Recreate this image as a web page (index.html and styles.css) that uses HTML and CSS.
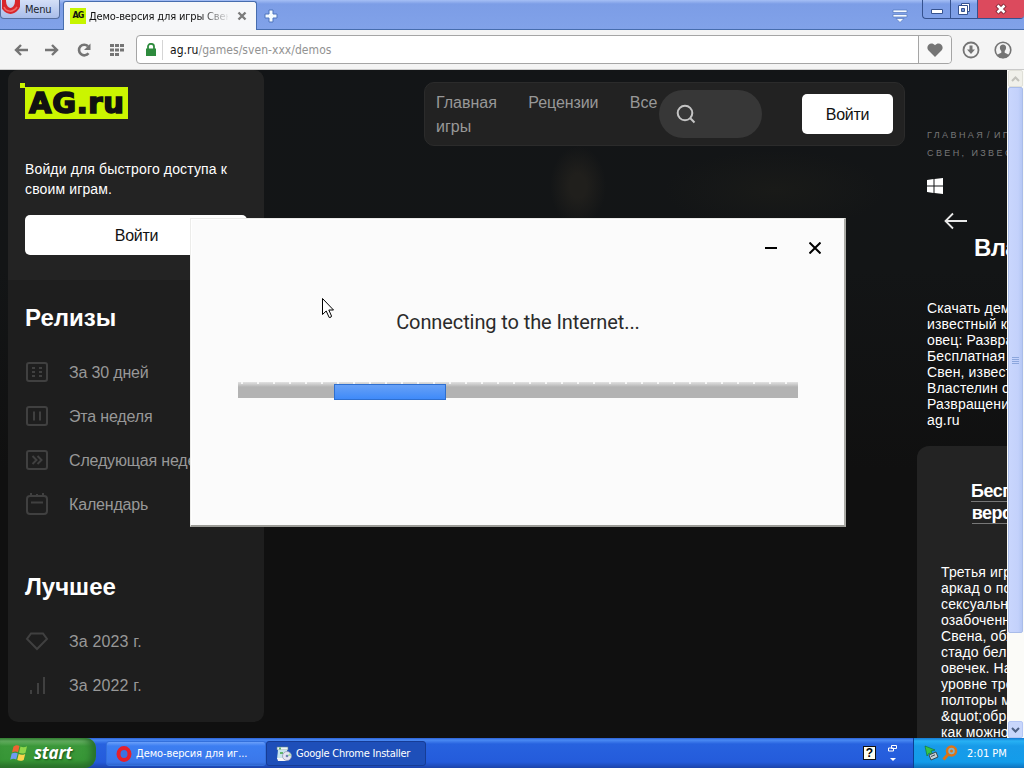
FILE: index.html
```html
<!DOCTYPE html>
<html lang="ru">
<head>
    <meta charset="UTF-8">
    <meta name="viewport" content="width=device-width, initial-scale=1.0">
    <title>Демо-версия для игры Свен</title>
    <link rel="stylesheet" href="styles.css">
</head>
<body>
    <div class="tab-bar">
        <div class="opera-menu">
            <svg width="18" height="15" viewBox="0 0 18 15">
                <ellipse cx="8.500" cy="1" rx="7.500" ry="10" fill="none" stroke="#d8262c" stroke-width="6"/>
                <path d="M2 7c2 5 9 6 13 0" fill="none" stroke="#f06a68" stroke-width="1.500"/>
            </svg>
            <span>Menu</span>
        </div>
        <div class="tab">
            <span class="favicon">AG</span>
            <span class="tab-title">Демо-версия для игры Свен</span>
            <svg class="tab-close" width="10" height="10" viewBox="0 0 10 10"><path d="M1.500 1.500l7 7M8.500 1.500l-7 7" stroke="#7b7b7b" stroke-width="2.400"/></svg>
        </div>
        <svg class="tab-add" width="14" height="14" viewBox="0 0 14 14"><path d="M5 1h4v4h4v4H9v4H5V9H1V5h4z" fill="#f4fbff" stroke="#4f74bd"/></svg>
        <svg class="tab-list" width="16" height="14" viewBox="0 0 16 14"><path d="M1 1h14v2.500H1zM1 5.500h14V8H1zM4 9.500h8L8 13.500z" fill="#f5faff" stroke="#5277be" stroke-width=".7"/></svg>
        <div class="window-buttons">
            <span class="win-btn"><svg width="14" height="17" viewBox="0 0 14 17"><path d="M1.500 9.500h11v4h-11z" fill="#fff" stroke="#35528f"/></svg></span>
            <span class="win-btn"><svg width="14" height="17" viewBox="0 0 14 17"><path d="M4.500 3.500h8v8h-8z" fill="#fff" stroke="#35528f"/><path d="M1.500 5.500h9v9h-9z" fill="#fff" stroke="#35528f"/><path d="M4.500 8.500h3v3h-3z" fill="#7593d4" stroke="#35528f"/></svg></span>
            <span class="win-btn win-close"><svg width="14" height="17" viewBox="0 0 14 17"><path d="M3 5l8 8M11 5l-8 8" stroke="#7b2433" stroke-width="4.500"/><path d="M3.500 5.500l7 7M10.500 5.500l-7 7" stroke="#fff" stroke-width="2.600"/></svg></span>
        </div>
    </div>

    <div class="toolbar">
        <svg class="tool back" width="14" height="12" viewBox="0 0 14 12"><path d="M14 6H2M7 1L2 6l5 5" fill="none" stroke="#747474" stroke-width="2.400"/></svg>
        <svg class="tool forward" width="14" height="12" viewBox="0 0 14 12"><path d="M0 6h12M7 1l5 5-5 5" fill="none" stroke="#747474" stroke-width="2.400"/></svg>
        <svg class="tool reload" width="14" height="14" viewBox="0 0 14 14"><path d="M11.500 10.300A5.300 5.300 0 1 1 11 3.200" fill="none" stroke="#747474" stroke-width="2.600"/><path d="M13.500 .5v6.500H7z" fill="#747474"/></svg>
        <svg class="tool dial" width="14" height="12" viewBox="0 0 14 12"><path d="M0 0h4v3H0zM5 0h4v3H5zM10 0h4v3h-4zM0 4.500h4v3H0zM5 4.500h4v3H5zM10 4.500h4v3h-4zM0 9h4v3H0zM5 9h4v3H5z" fill="#747474"/></svg>
        <div class="address">
            <svg width="12" height="13" viewBox="0 0 12 13"><path d="M1 5.500h10V13H1z" fill="#2e8b3d"/><path d="M3 6V3.500a3 2.700 0 0 1 6 0V6" fill="none" stroke="#2e8b3d" stroke-width="1.800"/></svg>
            <span class="url"><b>ag.ru</b>/games/sven-xxx/demos</span>
            <span class="heart"><svg width="16" height="14" viewBox="0 0 16 14"><path d="M8 14L1.300 7.200C-2 3 4.200-2.500 8 2.300 11.800-2.500 18 3 14.700 7.200z" fill="#757575"/></svg></span>
        </div>
        <svg class="tool download" width="18" height="18" viewBox="0 0 18 18"><circle cx="9" cy="9" r="7.500" fill="none" stroke="#747474" stroke-width="1.800"/><path d="M7.500 4.500h3v4h2.500L9 13 5 8.500h2.500z" fill="#747474"/></svg>
        <svg class="tool account" width="18" height="18" viewBox="0 0 18 18"><circle cx="9" cy="9" r="7.800" fill="none" stroke="#747474" stroke-width="1.600"/><path d="M3 14.500c1-2 3-2 4.300-2.800V10C5 7.500 5.500 3.500 9 3.500s4 4 1.700 6.500v1.700C12 12.500 14 12.500 15 14.500 12 18 6 18 3 14.500z" fill="#747474"/></svg>
    </div>

    <div class="viewport">
        <aside class="sidebar">
            <div class="login">
                <div class="logo"><span>AG.ru</span></div>
                <p>Войди для быстрого доступа к своим играм.</p>
                <a class="button">Войти</a>
            </div>
            <div class="menu">
                <h2>Релизы</h2>
                <ul>
                    <li>
                        <svg width="24" height="24" viewBox="0 0 24 24"><rect x="2" y="3" width="20" height="18" rx="2"/><path d="M7 8h3M14 8h3M7 12h3M14 12h3M7 16h3M14 16h3"/></svg>
                        <span>За 30 дней</span>
                    </li>
                    <li>
                        <svg width="24" height="24" viewBox="0 0 24 24"><rect x="2" y="3" width="20" height="18" rx="2"/><path d="M9 7.500v9M15 7.500v9"/></svg>
                        <span>Эта неделя</span>
                    </li>
                    <li>
                        <svg width="24" height="24" viewBox="0 0 24 24"><rect x="2" y="3" width="20" height="18" rx="2"/><path d="M7.500 8l4 4-4 4M12.500 8l4 4-4 4"/></svg>
                        <span>Следующая неделя</span>
                    </li>
                    <li>
                        <svg width="24" height="24" viewBox="0 0 24 24"><rect x="2" y="4" width="20" height="18" rx="3"/><path d="M6 10.500h12M6 1v4M12 2v3M18 1v4"/></svg>
                        <span>Календарь</span>
                    </li>
                </ul>
                <h2 class="best">Лучшее</h2>
                <ul class="years">
                    <li>
                        <svg width="24" height="24" viewBox="0 0 24 24"><path d="M6 4.500h12l4 5.500-10 10L2 10z"/></svg>
                        <span>За 2023 г.</span>
                    </li>
                    <li>
                        <svg width="24" height="24" viewBox="0 0 24 24"><path d="M6 17v4M13 10v11M19 4v17"/></svg>
                        <span>За 2022 г.</span>
                    </li>
                </ul>
            </div>
        </aside>

        <nav class="top-nav">
            <div class="links"><a>Главная</a> <a>Рецензии</a> <a>Все игры</a></div>
            <div class="search"><svg width="20" height="20" viewBox="0 0 20 20"><circle cx="9" cy="9" r="7.300"/><path d="M14.300 14.300l4.200 4.200"/></svg></div>
            <a class="button">Войти</a>
        </nav>

        <main class="game">
            <div class="crumbs">Главная<i>/</i>Игры<br>Свен, извест</div>
            <svg class="platform" width="16" height="16" viewBox="0 0 16 16"><path d="M0 2l6.500-1v6.500H0zM7.500 1L16 0v7.500H7.500zM0 8.500h6.500V15L0 14zM7.500 8.500H16V16l-8.500-1z" fill="#fff"/></svg>
            <svg class="arrow" width="24" height="18" viewBox="0 0 24 18"><path d="M23 9H2M9 1.500L1.500 9 9 16.500" fill="none" stroke="#e8e8e8" stroke-width="1.800"/></svg>
            <h1>Властел</h1>
            <p class="about">Скачать демо<br>известный ка<br>овец: Развращ<br>Бесплатная д<br>Свен, известн<br>Властелин ов<br>Развращение<br>ag.ru</p>
            <section class="demo">
                <h3><span>Беспла</span><br><span>версия</span></h3>
                <p>Третья игра<br>аркад о пох<br>сексуально<br>озабоченно<br>Свена, обж<br>стадо белых<br>овечек. На<br>уровне тре<br>полторы ми<br>&amp;quot;образ<br>как можно</p>
            </section>
        </main>

        <div class="scrollbar">
            <div class="scroll-btn"><svg width="9" height="6" viewBox="0 0 9 6"><path d="M1 5l3.500-3.500L8 5" fill="none" stroke="#c2c2bb" stroke-width="2"/></svg></div>
            <div class="thumb"><i></i><i></i><i></i><i></i></div>
            <div class="scroll-btn active"><svg width="9" height="6" viewBox="0 0 9 6"><path d="M1 1l3.500 3.500L8 1" fill="none" stroke="#4d6185" stroke-width="2"/></svg></div>
        </div>
    </div>

    <div class="taskbar">
        <div class="start">
            <svg width="20" height="18" viewBox="0 0 20 18">
                <path d="M3.500 2.500C6 .8 8 1 9.500 2L8 8.300C6.300 7.300 4.500 7.300 2 8.500z" fill="#ef6332"/>
                <path d="M10.500 2.600c2 1 4.300 1 6.500-.3l-1.500 6.400c-2.300 1.200-4.500 1-6.500 0z" fill="#8fd64a"/>
                <path d="M1.700 9.600c2.300-1.300 4.300-1.200 6-.2L6.200 15.500c-1.800-1-3.700-1-6 .2z" fill="#6e9bf2"/>
                <path d="M8.700 10c2 1 4.300 1 6.500-.1l-1.500 6c-2.300 1.300-4.500 1.200-6.500.2z" fill="#fbd44c"/>
            </svg>
            <span>start</span>
        </div>
        <div class="task">
            <svg width="16" height="16" viewBox="0 0 16 16"><ellipse cx="8" cy="8" rx="5.500" ry="6" fill="#3a73e2" stroke="#e5202b" stroke-width="4"/></svg>
            <span>Демо-версия для иг...</span>
        </div>
        <div class="task pressed">
            <svg width="16" height="16" viewBox="0 0 16 16"><path d="M1 1h11v3H1z" fill="#eef8f8" stroke="#5b7d8c" stroke-width=".6"/><path d="M2 4h9l1 9H1z" fill="#c7e5ec"/><path d="M3 1.500h2v2H3zM4 6h3v2H4z" fill="#62b56c"/><path d="M1 12h7l3 3H2z" fill="#f7f7f7"/><circle cx="11" cy="10" r="4.500" fill="#e5e4f2" stroke="#8a91ad" stroke-width=".7"/><path d="M11 10l3-3 1 3z" fill="#a8e0a9"/><circle cx="11" cy="10" r="1.300" fill="#6a83b1"/></svg>
            <span>Google Chrome Installer</span>
        </div>
        <div class="lang">
            <span class="help">?</span>
            <svg width="9" height="19" viewBox="0 0 9 19"><path d="M3.500 1.500h5v3h-5zM.5 4h5v3h-5z" fill="#2659d4" stroke="#fff"/><path d="M2 14h6l-3 3z" fill="#fff"/></svg>
        </div>
        <div class="tray">
            <svg width="15" height="16" viewBox="0 0 15 16"><path d="M1 1l10 4-4 1 2 4-4-2-2 3z" fill="#36c447" stroke="#137028" stroke-width=".6"/><path d="M5 10l7-3 2 5-7 3z" fill="#c5d0d5" stroke="#39494f"/><path d="M7 11.500l4-1.700" stroke="#39494f"/></svg>
            <svg width="16" height="16" viewBox="0 0 16 16"><circle cx="9.500" cy="6" r="4.500" fill="#7fb4cd" stroke="#dc7417" stroke-width="2.500"/><path d="M6 9.500L1.500 14.500" stroke="#dc7417" stroke-width="3"/><circle cx="9.500" cy="6" r="1.500" fill="#dc7417"/></svg>
            <span>2:01 PM</span>
        </div>
    </div>

    <div class="installer">
        <div class="installer-buttons">
            <svg width="12" height="12" viewBox="0 0 12 12"><path d="M0 6h12" stroke="#000" stroke-width="2"/></svg>
            <svg width="12" height="12" viewBox="0 0 12 12"><path d="M.5.5l11 11M11.500.5l-11 11" stroke="#000" stroke-width="2"/></svg>
        </div>
        <p>Connecting to the Internet...</p>
        <div class="progress"><div class="bar"></div></div>
    </div>

    <svg class="cursor" width="14" height="22" viewBox="0 0 14 22"><path d="M1.500 1.500v16l3.700-3.500 3 6.500q2.500 0 2.300-1.500l-2.700-6h4.700z" fill="#fff" stroke="#000"/></svg>
</body>
</html>
```

FILE: styles.css
```css
* {
    box-sizing: border-box;
}

body {
    display: flex;
    flex-direction: column;
    width: 1024px;
    height: 768px;
    margin: 0;
    overflow: hidden;
    position: relative;
    background: #111;
    font-family: "Liberation Sans", Arial, sans-serif;
}

svg {
    display: block;
    flex-shrink: 0;
}

p, h1, h2, h3, ul {
    margin: 0;
    padding: 0;
}

/* browser tabs */
.tab-bar {
    display: flex;
    height: 30px;
    background: linear-gradient(#a5bff5 0, #7c9de6 4px, #81a2e9 100%);
    border-bottom: 1px solid #476dae;
    font-family: "DejaVu Sans Condensed", "DejaVu Sans", sans-serif;
    font-size: 11px;
}

.opera-menu {
    display: flex;
    gap: 5px;
    width: 60px;
    height: 19px;
    padding-left: 1px;
    line-height: 20px;
    letter-spacing: -0.2px;
    color: #20242c;
    background: linear-gradient(#d4dff7, #a9bdea);
    border: 1px solid #566f9f;
    border-top: 0;
    border-radius: 0 0 4px 4px;
}

.tab {
    display: flex;
    align-items: center;
    width: 194px;
    height: 29px;
    margin: 1px 0 0 3px;
    padding: 0 9px 0 6px;
    background: #f6f7f9;
    border: 1px solid #476dae;
    border-bottom: 0;
    border-radius: 3px 3px 0 0;
}

.favicon {
    width: 16px;
    height: 16px;
    margin-right: 3px;
    background: #c6f500;
    color: #111;
    font: bold 8px/16px "DejaVu Sans", sans-serif;
    letter-spacing: -1px;
    text-align: center;
}

.tab-title {
    width: 139px;
    overflow: hidden;
    white-space: nowrap;
    color: #111;
    letter-spacing: -0.15px;
    -webkit-mask-image: linear-gradient(90deg, #000 112px, transparent 141px);
}

.tab-close {
    margin-left: 9px;
}

.tab-add {
    margin: 9px 0 0 7px;
}

.tab-list {
    margin: 9px 14px 0 auto;
}

.window-buttons {
    display: flex;
    height: 19px;
    border: 1px solid #35528f;
    border-top: 0;
    border-right: 0;
    border-radius: 0 0 4px 4px;
    overflow: hidden;
}

.win-btn {
    display: flex;
    justify-content: center;
    width: 28px;
    border-right: 1px solid #35528f;
}

.win-btn:nth-child(2) {
    width: 27px;
}

.win-close {
    width: 46px;
    background: #dc4a5d;
    border-right: 0;
}

/* address bar */
.toolbar {
    display: flex;
    align-items: center;
    height: 40px;
    padding-left: 14px;
    background: #f4f4f4;
    border-bottom: 1px solid #c9c9c9;
}

.forward {
    margin-left: 17px;
}

.reload {
    margin-left: 18px;
}

.dial {
    margin-left: 19px;
}

.address {
    display: flex;
    align-items: center;
    width: 816px;
    height: 29px;
    margin-left: 12px;
    padding-left: 8px;
    background: #fff;
    border: 1px solid #a5a5a5;
    border-radius: 4px;
}

.url {
    flex: 1;
    margin-left: 5px;
    padding-left: 7px;
    border-left: 1px solid #d5d5d5;
    color: #929292;
    font: 12px/20px "DejaVu Sans Condensed", "DejaVu Sans", sans-serif;
    letter-spacing: 0.05px;
}

.url b {
    color: #111;
    font-weight: normal;
}

.heart {
    display: flex;
    align-items: center;
    justify-content: center;
    width: 33px;
    height: 27px;
    border-left: 1px solid #a5a5a5;
    border-radius: 0 4px 4px 0;
    background: #f8f8f8;
}

.download {
    margin-left: 10px;
}

.account {
    margin-left: 14px;
}

/* site */
.viewport {
    display: flex;
    height: 668px;
    background:
        radial-gradient(ellipse 28px 40px at 578px 116px, #201f1c 30%, transparent 100%),
        radial-gradient(ellipse 110px 40px at 775px 120px, #191a18, transparent 100%),
        linear-gradient(#131517, #131516 200px, #101010 400px);
}

.sidebar {
    width: 256px;
    height: 652px;
    margin-left: 8px;
    border-radius: 10px;
    overflow: hidden;
    background: #1e1e1e;
    color: #fff;
}

.login {
    height: 210px;
    padding: 17px 17px 0;
    background: #232323;
}

.logo {
    position: relative;
    width: 103px;
    height: 32px;
    background: #cbf500;
    color: #111;
    font: bold 29px/33px "DejaVu Sans", sans-serif;
    -webkit-text-stroke: 1.6px #111;
}

.logo::before {
    content: "";
    position: absolute;
    left: -5px;
    top: -4px;
    width: 5px;
    height: 5px;
    background: #cbf500;
}

.logo span {
    display: block;
    padding-left: 4px;
    letter-spacing: 0.7px;
}

.login p {
    margin-top: 40px;
    font-size: 14px;
    line-height: 20px;
    letter-spacing: 0.14px;
}

.button {
    display: block;
    height: 40px;
    border-radius: 5px;
    background: #fff;
    color: #111;
    font-size: 16px;
    line-height: 41px;
    letter-spacing: -0.3px;
    text-align: center;
}

.login .button {
    margin-top: 16px;
    padding-left: 1px;
}

.menu {
    padding: 21px 17px 0;
}

.menu h2 {
    font-size: 24px;
    line-height: 34px;
}

.menu .best {
    margin-top: 44px;
}

.menu ul {
    margin-top: 15px;
    list-style: none;
}

.menu li {
    display: flex;
    align-items: center;
    gap: 20px;
    height: 44px;
    color: #989898;
    font-size: 16px;
    letter-spacing: -0.17px;
    white-space: nowrap;
}

.menu .years li {
    letter-spacing: 0.15px;
}

.menu li span {
    padding-top: 2px;
}

.menu li svg, .search svg {
    fill: none;
    stroke: #404040;
    stroke-width: 2;
}

.top-nav {
    display: flex;
    width: 481px;
    height: 64px;
    margin: 12px 0 0 160px;
    padding: 7px 11px;
    border: 1px solid #2b2b2b;
    border-radius: 10px;
    background: #222;
}

.links {
    width: 223px;
    padding-top: 1px;
    color: #989898;
    font-size: 16px;
    line-height: 24px;
}

.links a {
    margin-right: 27px;
}

.links a:nth-child(2) {
    letter-spacing: -0.1px;
}

.links a:last-child {
    margin-right: 0;
}

.search {
    width: 103px;
    height: 48px;
    padding: 14px 17px;
    border-radius: 24px;
    background: #373737;
}

.search svg {
    stroke: #c4c4c4;
}

.top-nav .button {
    width: 91px;
    margin: 4px 0 0 40px;
}

/* game column, cut off by the window edge */
.game {
    width: 90px;
    margin-left: 12px;
    margin-right: auto;
    padding-top: 56px;
    overflow: hidden;
    white-space: nowrap;
    color: #fff;
}

.crumbs {
    margin-left: 10px;
    color: #777;
    font-size: 9px;
    line-height: 18px;
    letter-spacing: 2.4px;
    text-transform: uppercase;
}

.crumbs i {
    margin: 0 2px;
    font-style: normal;
}

.platform {
    margin: 16px 0 0 10px;
}

.arrow {
    margin: 18px 0 0 27px;
}

.game h1 {
    margin: 2px 0 0 57px;
    font-size: 24px;
    line-height: 32px;
    letter-spacing: -0.7px;
}

.game p {
    font-size: 14px;
    line-height: 16px;
    letter-spacing: 0.15px;
}

.about {
    margin: 36px 0 0 10px;
}

.demo {
    height: 292px;
    margin-top: 18px;
    padding: 34px 0 0 24px;
    border-radius: 12px 0 0 0;
    background: #232323;
}

.demo h3 {
    width: 100px;
    margin-left: 11px;
    text-align: center;
    font-size: 18px;
    line-height: 22px;
    letter-spacing: -0.5px;
}

.demo h3 span {
    border-bottom: 1px solid #777;
}

.demo p {
    margin-top: 40px;
}

.scrollbar {
    display: flex;
    flex-direction: column;
    width: 17px;
    padding: 0 1px;
    background: #fbfbf8;
}

.scroll-btn {
    display: flex;
    align-items: center;
    justify-content: center;
    height: 17px;
    border: 1px solid #e0e0d8;
    border-radius: 2px;
    background: #f0f0ea;
}

.scroll-btn.active {
    margin-top: auto;
    border-color: #b4c6f5;
    background: #c8d6fb;
}

.thumb {
    display: flex;
    flex-direction: column;
    align-items: center;
    justify-content: center;
    gap: 1px;
    height: 546px;
    border: 1px solid #a9bce9;
    border-radius: 2px;
    background: linear-gradient(90deg, #c9d6fd, #c3d1fb 70%, #b5c7f4);
}

.thumb i {
    width: 7px;
    height: 1px;
    background: #8ca6dd;
}

/* XP taskbar */
.taskbar {
    display: flex;
    height: 30px;
    background: linear-gradient(#2a5fd3 0, #4a8af3 2px, #2762df 6px, #245bdb 24px, #1b43ab 100%);
    color: #fff;
    font-family: "DejaVu Sans Condensed", "DejaVu Sans", sans-serif;
    font-size: 11px;
}

.start {
    display: flex;
    align-items: center;
    gap: 4px;
    width: 96px;
    padding-left: 10px;
    border-radius: 0 10px 12px 0;
    background: linear-gradient(#3d8b3c 0, #6bb567 3px, #3b983a 8px, #379636 22px, #2a7129 100%);
    box-shadow: inset -5px 0 7px #28702b;
    font: italic bold 17px/28px "Open Sans", "DejaVu Sans", sans-serif;
    letter-spacing: -0.2px;
    text-shadow: 1px 1px 2px #174f17;
}

.task {
    display: flex;
    align-items: center;
    gap: 4px;
    width: 160px;
    height: 25px;
    margin: 3px 0 0 10px;
    padding-left: 9px;
    border: 1px solid #3370dc;
    border-radius: 3px;
    background: linear-gradient(#6aa0fa, #3c7ef1 4px, #3a77ea 20px, #2f65cf);
    letter-spacing: -0.1px;
    white-space: nowrap;
}

.task.pressed {
    margin-left: 0;
    border-color: #163c95;
    background: #1e4fb9;
    letter-spacing: -0.25px;
}

.lang {
    display: flex;
    align-items: center;
    gap: 12px;
    margin-left: auto;
    margin-right: 16px;
}

.help {
    width: 13px;
    height: 14px;
    border: 1px solid #111;
    background: #fffff2;
    color: #000;
    font: bold 12px/13px "Liberation Sans", sans-serif;
    text-align: center;
}

.tray {
    display: flex;
    align-items: center;
    width: 111px;
    padding-left: 10px;
    border-left: 1px solid #0b3f93;
    background: linear-gradient(#1579d4 0, #27b1f4 3px, #189be9 8px, #139cea 24px, #0e72bd 100%);
}

.tray svg + svg {
    margin-left: 3px;
}

.tray span {
    margin-left: 9px;
}

/* installer window */
.installer {
    position: absolute;
    left: 190px;
    top: 218px;
    width: 656px;
    height: 309px;
    padding: 23px 46px 0 47px;
    border: 1px solid #ececea;
    border-right: 2px solid #aaaaa5;
    border-bottom: 2px solid #9c9c97;
    background: #fbfbfb;
    box-shadow: inset 1px 1px #fff;
}

.installer-buttons {
    display: flex;
    justify-content: flex-end;
    gap: 32px;
    margin-right: -23px;
}

.installer p {
    margin-top: 54px;
    color: #2b2b2b;
    font: 20px/28px Roboto, "Liberation Sans", sans-serif;
    letter-spacing: -0.1px;
    text-align: center;
}

.progress {
    height: 16px;
    margin-top: 46px;
    background:
        repeating-linear-gradient(90deg, transparent 0 3px, #f6f6f6 3px 5px, transparent 5px 16px) 0 0 / 100% 2px no-repeat,
        linear-gradient(#e2e2e2, #b3b3b3 5px);
}

.bar {
    width: 112px;
    height: 16px;
    margin-left: 96px;
    border: 1px solid #2e6fd0;
    background: linear-gradient(#68a1f6, #3f8af9);
    transform: translateY(2px);
}

.cursor {
    position: absolute;
    left: 321px;
    top: 297px;
}
```
